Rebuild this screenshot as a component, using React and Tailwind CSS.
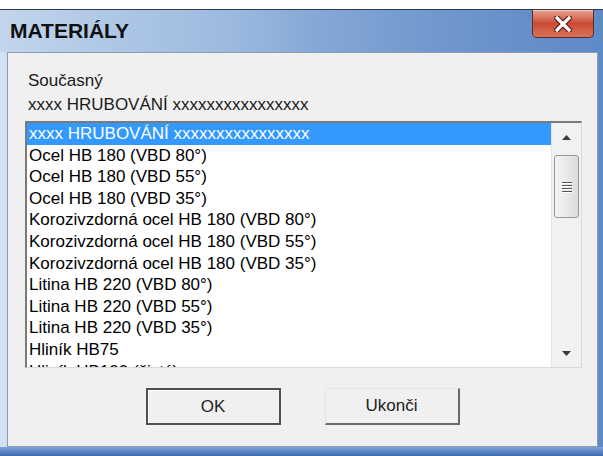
const rows = [
  "xxxx HRUBOVÁNÍ xxxxxxxxxxxxxxxx",
  "Ocel HB 180 (VBD 80°)",
  "Ocel HB 180 (VBD 55°)",
  "Ocel HB 180 (VBD 35°)",
  "Korozivzdorná ocel HB 180 (VBD 80°)",
  "Korozivzdorná ocel HB 180 (VBD 55°)",
  "Korozivzdorná ocel HB 180 (VBD 35°)",
  "Litina HB 220 (VBD 80°)",
  "Litina HB 220 (VBD 55°)",
  "Litina HB 220 (VBD 35°)",
  "Hliník HB75",
  "Hliník HB100 (čistý)",
];

function Arrow({ down }) {
  return (
    <svg width="9" height="5" viewBox="0 0 9 5">
      <path d={down ? "M0 0h9L4.5 5z" : "M0 5h9L4.5 0z"} fill="#3a3a3a" />
    </svg>
  );
}

function ScrollBar() {
  return (
    <div className="w-[30px] flex flex-col bg-[#f1f1f1] border-l border-[#e4e4e4]">
      <div className="h-[28px] flex items-center justify-center">
        <Arrow />
      </div>
      <div className="mt-[4px] mx-[2px] h-[63px] rounded-[3px] border border-[#979797] bg-gradient-to-r from-[#f5f5f5] to-[#dcdcdc] flex flex-col items-center justify-center gap-[2px]">
        {[0, 1, 2, 3].map((i) => (
          <div key={i} className="w-[10px] h-[1px] bg-[#555] shadow-[0_1px_0_#fff]" />
        ))}
      </div>
      <div className="flex-1" />
      <div className="h-[28px] flex items-center justify-center">
        <Arrow down />
      </div>
    </div>
  );
}

function CloseButton() {
  return (
    <div className="w-[62px] h-[28px] rounded-b-[5px] border border-t-0 border-[#5e2a24] bg-gradient-to-b from-[#e9a394] via-[#c94a33] to-[#d9735a] shadow-[inset_0_1px_0_rgba(255,255,255,0.5)] flex items-center justify-center">
      <svg width="18" height="16" viewBox="0 0 18 16">
        <path d="M3 2l12 12M15 2L3 14" stroke="#5a1e16" strokeWidth="5.5" strokeLinecap="square" />
        <path d="M3 2l12 12M15 2L3 14" stroke="#fff" strokeWidth="3.2" strokeLinecap="square" />
      </svg>
    </div>
  );
}

export default function App() {
  return (
    <div className="w-[603px] h-[456px] bg-white pt-[9px] flex flex-col font-['Liberation_Sans',Arial,sans-serif]">
      <div className="flex-1 flex flex-col border-t border-[#2d3a4a] bg-gradient-to-r from-[#d3e2f2] via-[#4576bb] to-[#5f8ac8]">
        {/* title bar */}
        <div className="h-[42px] flex justify-between bg-gradient-to-r from-[#c2d5ec] via-[#a3bfe2] via-30% to-transparent">
          <div className="pl-[10px] self-center text-[21px] font-bold text-[#111]">MATERIÁLY</div>
          <div className="pr-[9px]">
            <CloseButton />
          </div>
        </div>

        <div className="flex-1 flex pl-[7px] pr-[5px]">
          {/* client area */}
          <div className="flex-1 flex flex-col bg-[#f0f0f0] border border-[#8b9cb3] text-[17px] text-black">
            <div className="pl-[20px] mt-[16px] leading-[24px] text-[#1a1a1a]">
              <div>Současný</div>
              <div>xxxx HRUBOVÁNÍ xxxxxxxxxxxxxxxx</div>
            </div>

            <div className="mt-[4px] ml-[17px] mr-[15px] h-[247px] flex bg-white border-t-2 border-l-2 border-[#7a7a7a] border-r border-b border-r-[#d9d9d9] border-b-[#d9d9d9]">
              <div className="flex-1 overflow-hidden">
                {rows.map((r, i) => (
                  <div
                    key={r}
                    className={
                      i === 0
                        ? "h-[21.6px] pl-[2px] flex items-center whitespace-nowrap bg-[#3399ff] text-white"
                        : "h-[21.6px] pl-[2px] flex items-center whitespace-nowrap"
                    }
                  >
                    {r}
                  </div>
                ))}
              </div>
              <ScrollBar />
            </div>

            <div className="mt-[20px] flex justify-center gap-[44px]">
              <button className="w-[135px] h-[37px] bg-[#f0f0f0] border-2 border-[#505050] shadow-[inset_1px_1px_0_#fff] text-[17px] text-[#222]">
                OK
              </button>
              <button className="w-[135px] h-[37px] bg-[#f0f0f0] border-t border-l border-t-[#e6e6e6] border-l-[#e6e6e6] border-r-2 border-b-2 border-r-[#6a6a6a] border-b-[#6a6a6a] text-[17px] text-[#222]">
                Ukonči
              </button>
            </div>
          </div>
        </div>

        {/* bottom frame */}
        <div className="h-[9px] bg-gradient-to-b from-[#7ea3d7] to-[#3c6bb2]" />
      </div>
    </div>
  );
}
